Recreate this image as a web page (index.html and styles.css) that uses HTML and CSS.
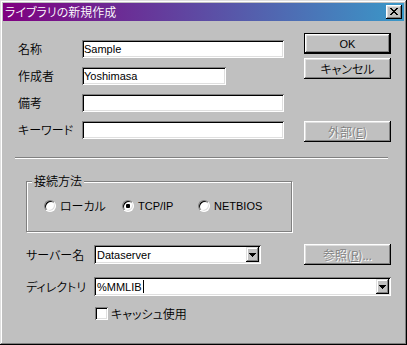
FILE: index.html
```html
<!DOCTYPE html>
<html lang="ja">
<head>
<meta charset="utf-8">
<title>ライブラリの新規作成</title>
<link rel="stylesheet" href="styles.css">
</head>
<body>
<div class="window">
  <div class="titlebar">
    <span class="title">ライブラリの新規作成</span>
    <span class="close">
      <svg width="8" height="7" viewBox="0 0 8 7" shape-rendering="crispEdges"><path d="M0 0h2v1h-2z M6 0h2v1h-2z M1 1h2v1h-2z M5 1h2v1h-2z M2 2h4v1h-4z M3 3h2v1h-2z M2 4h4v1h-4z M1 5h2v1h-2z M5 5h2v1h-2z M0 6h2v1h-2z M6 6h2v1h-2z" fill="#000"/></svg>
    </span>
  </div>
  <div class="content">
    <div class="top">
      <div class="fields">
        <span class="lbl">名称</span><div class="field w-long"><span class="en">Sample</span></div>
        <span class="lbl">作成者</span><div class="field w-short"><span class="en">Yoshimasa</span></div>
        <span class="lbl">備考</span><div class="field w-long"></div>
        <span class="lbl">キーワード</span><div class="field w-long"></div>
      </div>
      <div class="actions">
        <div class="btn default"><span class="en">OK</span></div>
        <div class="btn cancel">キャンセル</div>
        <div class="btn disabled ext">外部(<u>E</u>)</div>
      </div>
    </div>
    <div class="sep"></div>
    <fieldset class="group">
      <legend>接続方法</legend>
      <div class="radios">
        <span class="ri r1"><span class="radio"></span>ローカル</span>
        <span class="ri r2"><span class="radio on"></span><span class="en">TCP/IP</span></span>
        <span class="ri r3"><span class="radio"></span><span class="en">NETBIOS</span></span>
      </div>
    </fieldset>
    <div class="row server">
      <span class="rlbl">サーバー名</span>
      <div class="combo c-short"><span class="val en">Dataserver</span><span class="dd"><svg width="7" height="4" viewBox="0 0 7 4" shape-rendering="crispEdges"><path d="M0 0h7v1h-7z M1 1h5v1h-5z M2 2h3v1h-3z M3 3h1v1h-1z" fill="#000"/></svg></span></div>
      <div class="btn disabled ref">参照(<u>R</u>)...</div>
    </div>
    <div class="row dir">
      <span class="rlbl">ディレクトリ</span>
      <div class="combo c-long"><span class="val en">%MMLIB<span class="caret"></span></span><span class="dd"><svg width="7" height="4" viewBox="0 0 7 4" shape-rendering="crispEdges"><path d="M0 0h7v1h-7z M1 1h5v1h-5z M2 2h3v1h-3z M3 3h1v1h-1z" fill="#000"/></svg></span></div>
    </div>
    <div class="row chk">
      <span class="checkbox"></span>
      <span>キャッシュ使用</span>
    </div>
  </div>
</div>
</body>
</html>
```

FILE: styles.css
```css
* { box-sizing: border-box; }
html, body { margin: 0; background: #c0c0c0; }
body {
  font-family: "Noto Sans CJK JP", sans-serif;
  font-size: 12px;
  font-weight: 350;
  line-height: 12px;
  font-feature-settings: "palt";
  color: #000;
}
.en {
  font-family: "Liberation Sans", sans-serif;
  font-size: 11px;
  font-weight: 400;
  font-feature-settings: normal;
}
.window {
  width: 407px;
  height: 345px;
  background: #c0c0c0;
  padding: 3px;
  box-shadow: inset -1px -1px #000, inset 1px 1px #dfdfdf, inset -2px -2px #808080, inset 2px 2px #fff;
  display: flex;
  flex-direction: column;
}
.titlebar {
  height: 18px;
  background: linear-gradient(to right, #800080, #3a98c8);
  display: flex;
  align-items: center;
  justify-content: space-between;
  padding: 0 2px 0 2px;
}
.title { color: #fff; line-height: 12px; }
.close {
  width: 16px;
  height: 14px;
  background: #c0c0c0;
  box-shadow: inset -1px -1px #000, inset 1px 1px #fff, inset -2px -2px #808080, inset 2px 2px #dfdfdf;
  display: flex;
  align-items: center;
  justify-content: center;
  padding: 0 1px 1px 0;
}
.close svg { display: block; }
.content { flex: 1; display: flex; flex-direction: column; }
.top { display: flex; align-items: flex-start; }
.fields {
  display: grid;
  grid-template-columns: 64px auto;
  grid-auto-rows: 18px;
  row-gap: 9px;
  align-items: center;
  margin: 19px 0 0 15px;
}
.field, .combo, .checkbox {
  background: #fff;
  box-shadow: inset 1px 1px #808080, inset -1px -1px #fff, inset 2px 2px #000, inset -2px -2px #dfdfdf;
}
.field {
  height: 18px;
  padding: 0 2px;
  display: flex;
  align-items: center;
}
.w-long { width: 202px; }
.w-short { width: 144px; }
.actions {
  display: flex;
  flex-direction: column;
  margin: 12px 0 0 20px;
}
.btn {
  width: 87px;
  height: 21px;
  display: flex;
  align-items: center;
  justify-content: center;
  background: #c0c0c0;
  box-shadow: inset -1px -1px #000, inset 1px 1px #fff, inset -2px -2px #808080, inset 2px 2px #dfdfdf;
}
.btn.default { border: 1px solid #000; }
.btn.cancel { margin-top: 4px; }
.btn.ext { margin-top: 42px; }
.btn.disabled { color: #808080; text-shadow: 1px 1px 0 #fff; }
.btn u { text-decoration: underline; }
.sep {
  margin: 15px 0 0 12px;
  width: 373px;
  height: 2px;
  border-top: 1px solid #808080;
  border-bottom: 1px solid #fff;
}
.group {
  margin: 16px 0 0 23px;
  width: 266px;
  height: 57px;
  min-width: 0;
  padding: 0;
  border: 1px solid #808080;
  box-shadow: inset 1px 1px #fff, 1px 1px #fff;
}
.group legend {
  margin-left: 5px;
  padding: 0 2px;
  line-height: 12px;
  height: 12px;
  background: #c0c0c0;
}
.radios {
  display: flex;
  align-items: center;
  height: 12px;
  margin: 13px 0 0 17px;
}
.ri { display: flex; align-items: center; gap: 4px; }
.r1 { width: 78px; }
.r2 { width: 76px; }
.radio {
  width: 12px;
  height: 12px;
  border-radius: 50%;
  background: #fff;
  border: 1px solid;
  border-color: #808080 #fff #fff #808080;
  box-shadow: inset 1px 1px #000, inset -1px -1px #dfdfdf;
  display: flex;
  align-items: center;
  justify-content: center;
}
.radio.on::after {
  content: "";
  width: 4px;
  height: 4px;
  border-radius: 1px;
  background: #000;
}
.row { display: flex; align-items: center; }
.server { margin: 12px 0 0 23px; height: 21px; }
.dir { margin: 12px 0 0 23px; height: 19px; }
.rlbl { width: 68px; }
.combo {
  height: 19px;
  padding: 2px;
  display: flex;
  align-items: stretch;
}
.c-short { width: 167px; }
.c-long { width: 297px; }
.combo .val {
  flex: 1;
  display: flex;
  align-items: center;
  padding-left: 1px;
}
.caret {
  display: inline-block;
  width: 1px;
  height: 13px;
  background: #000;
  margin-left: 1px;
}
.dd {
  width: 13px;
  background: #c0c0c0;
  box-shadow: inset -1px -1px #000, inset 1px 1px #dfdfdf, inset -2px -2px #808080, inset 2px 2px #fff;
  display: flex;
  align-items: center;
  justify-content: center;
}
.dd svg { display: block; }
.btn.ref { margin-left: 43px; }
.chk { margin: 11px 0 0 92px; gap: 3px; height: 13px; }
.checkbox { width: 13px; height: 13px; display: block; }
```
